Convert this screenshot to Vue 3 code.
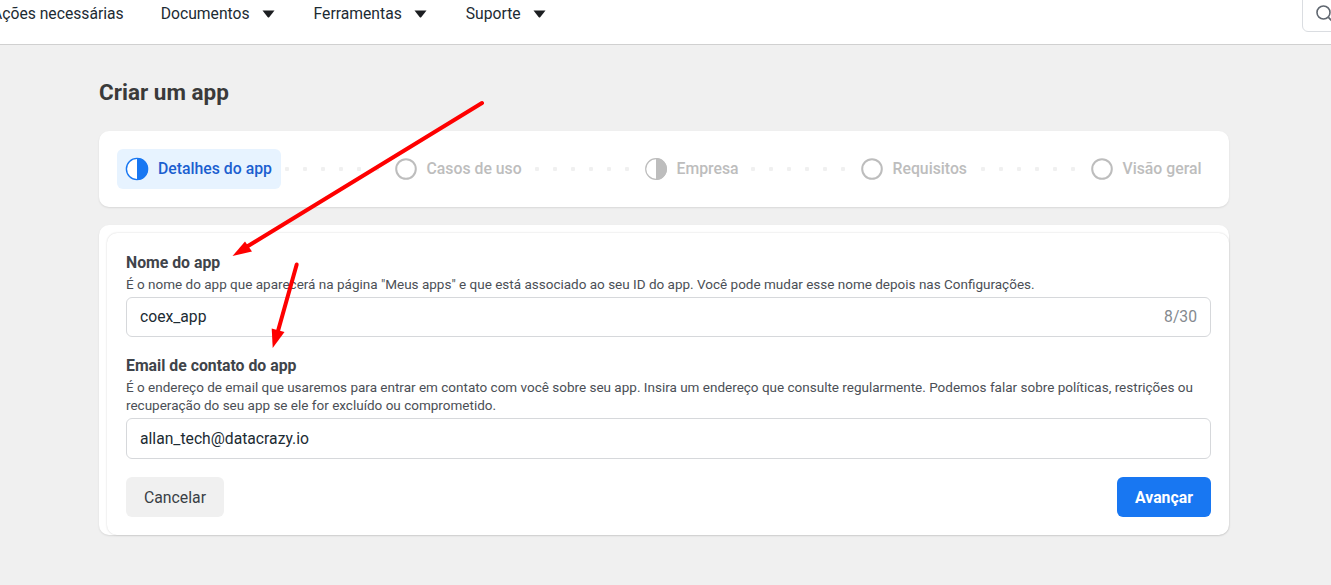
<script setup>
const navItems = [
  { label: 'Ações necessárias', caret: false },
  { label: 'Documentos', caret: true },
  { label: 'Ferramentas', caret: true },
  { label: 'Suporte', caret: true },
]
const steps = [
  { label: 'Casos de uso', icon: 'ring', width: 140 },
  { label: 'Empresa', icon: 'half', width: 106 },
  { label: 'Requisitos', icon: 'ring', width: 120 },
  { label: 'Visão geral', icon: 'ring', width: 112 },
]
</script>

<template>
  <div class="page">
    <header class="topbar">
      <nav class="nav">
        <a v-for="item in navItems" :key="item.label" class="nav-item">
          <span>{{ item.label }}</span>
          <svg v-if="item.caret" class="caret" width="13" height="8" viewBox="0 0 13 8"><path d="M0.5 0.5h12L7.4 7a1.2 1.2 0 0 1-1.8 0z" fill="#1c1e21" /></svg>
        </a>
      </nav>
      <div class="search">
        <svg width="20" height="20" viewBox="0 0 20 20" fill="none" stroke="#606770" stroke-width="1.6"><circle cx="8.5" cy="8.5" r="6.5" /><path d="M13.4 13.4 18 18" /></svg>
      </div>
    </header>

    <main class="content">
      <h1 class="title">Criar um app</h1>

      <section class="card stepper">
        <div class="step active">
          <svg width="24" height="24" viewBox="0 0 24 24"><circle cx="12" cy="12" r="10.6" fill="#fff" stroke="#1877f2" stroke-width="1.4" /><path d="M12 1a11 11 0 0 1 0 22z" fill="#1877f2" /></svg>
          <span class="step-label">Detalhes do app</span>
        </div>
        <template v-for="step in steps" :key="step.label">
          <div class="dots"><i v-for="n in 6" :key="n"></i></div>
          <div class="step" :style="{ width: step.width + 'px' }">
            <svg v-if="step.icon === 'ring'" width="22" height="22" viewBox="0 0 22 22"><circle cx="11" cy="11" r="9.8" fill="none" stroke="#bdbdbd" stroke-width="2" /></svg>
            <svg v-else width="22" height="22" viewBox="0 0 22 22"><circle cx="11" cy="11" r="10.3" fill="#fff" stroke="#bdbdbd" stroke-width="1.2" /><path d="M11 0a11 11 0 0 1 0 22z" fill="#bdbdbd" /></svg>
            <span class="step-label">{{ step.label }}</span>
          </div>
        </template>
      </section>

      <section class="card outer">
        <form class="inner" @submit.prevent>
          <div class="field first">
            <label>Nome do app</label>
            <p>É o nome do app que aparecerá na página "Meus apps" e que está associado ao seu ID do app. Você pode mudar esse nome depois nas Configurações.</p>
            <div class="input"><span>coex_app</span><span class="count">8/30</span></div>
          </div>
          <div class="field second">
            <label>Email de contato do app</label>
            <p>É o endereço de email que usaremos para entrar em contato com você sobre seu app. Insira um endereço que consulte regularmente. Podemos falar sobre políticas, restrições ou recuperação do seu app se ele for excluído ou comprometido.</p>
            <div class="input tall"><span>allan_tech@datacrazy.io</span></div>
          </div>
          <div class="actions">
            <button type="button" class="btn cancel">Cancelar</button>
            <button type="button" class="btn next">Avançar</button>
          </div>
        </form>
      </section>
    </main>

    <svg class="arrows" width="1331" height="585" viewBox="0 0 1331 585">
      <path d="M482 103 248 246" stroke="#fe0000" stroke-width="4" stroke-linecap="round" fill="none" />
      <path d="M232.5 256 245 241.5 252 251.5z" fill="#fe0000" />
      <path d="M296.7 264.5 278 331" stroke="#fe0000" stroke-width="4" stroke-linecap="round" fill="none" />
      <path d="M272.7 348 271.7 328.5 284.5 332z" fill="#fe0000" />
    </svg>
  </div>
</template>

<style>
html, body { margin: 0; background: #f0f0f0; }
</style>

<style scoped>
.page {
  position: relative;
  width: 1331px;
  height: 585px;
  overflow: hidden;
  background: #f0f0f0;
  font-family: Roboto, "Liberation Sans", sans-serif;
  color: #1c1e21;
}
.topbar {
  display: flex;
  justify-content: space-between;
  height: 44px;
  background: #fff;
  border-bottom: 1px solid #d0d0d0;
}
.nav {
  display: flex;
  gap: 40px;
  margin-left: -8px;
  height: 26px;
  align-items: center;
}
.nav-item {
  display: flex;
  align-items: center;
  gap: 12px;
  font-size: 15.7px;
  color: #1c2b33;
  white-space: nowrap;
}
.nav-item:first-child { margin-right: -3px; }
.caret { flex: none; margin-top: 1px; margin-right: -1px; }
.search {
  box-sizing: border-box;
  width: 40px;
  height: 33px;
  margin-top: -1px;
  margin-right: -11px;
  padding: 4px 0 0 12px;
  border: 1px solid #dadde1;
  border-radius: 0 0 0 6px;
}
.content {
  display: flex;
  flex-direction: column;
  width: 1130px;
  margin-left: 99px;
}
.title {
  margin: 33px 0 0;
  height: 53px;
  font-size: 22.5px;
  line-height: 28px;
  font-weight: 700;
  color: #3a3a3a;
}
.card {
  background: #fff;
  border-radius: 10px;
  box-shadow: 0 1px 2px rgba(0, 0, 0, 0.1);
}
.stepper {
  box-sizing: border-box;
  display: flex;
  align-items: center;
  height: 76px;
  padding-left: 18px;
}
.step {
  box-sizing: border-box;
  display: flex;
  align-items: center;
  gap: 9.5px;
  flex: none;
  font-size: 15.8px;
  font-weight: 500;
  color: #bdbdbd;
  white-space: nowrap;
}
.step-label { margin-bottom: 2px; }
.step.active {
  height: 40px;
  width: 164px;
  margin-right: 4px;
  padding-left: 8px;
  gap: 9px;
  background: #e7f3ff;
  border-radius: 6px;
  color: #1b5fd0;
}
.dots {
  flex: none;
  display: flex;
  gap: 14px;
  margin-right: 16px;
}
.dots i {
  width: 4px;
  height: 4px;
  background: #f0f0f0;
  border-radius: 1px;
}
.outer {
  margin-top: 18px;
  height: 310px;
  padding: 8px 0 0 8px;
  box-sizing: border-box;
}
.inner {
  box-sizing: border-box;
  height: 302px;
  padding: 20px 18px 0 19px;
  border-radius: 10px;
  box-shadow: 0 0 2px rgba(0, 0, 0, 0.18);
}
.field label {
  display: block;
  font-size: 15.8px;
  line-height: 20px;
  font-weight: 700;
  color: #3f444a;
}
.field p {
  margin: 2px 0 0;
  font-size: 13.5px;
  line-height: 18px;
  color: #4b4f56;
}
.field.second { margin-top: 19px; }
.input {
  box-sizing: border-box;
  display: flex;
  justify-content: space-between;
  align-items: center;
  height: 40px;
  margin-top: 4px;
  padding: 0 13px 1px;
  border: 1px solid #d6d8db;
  border-radius: 6px;
  font-size: 15.7px;
  color: #1c2b33;
}
.input.tall { height: 41px; }
.count { color: #858a8f; }
.actions {
  display: flex;
  justify-content: space-between;
  margin-top: 18px;
}
.btn {
  height: 40px;
  border: 0;
  border-radius: 6px;
  font-family: inherit;
  font-size: 15.8px;
}
.cancel {
  width: 98px;
  background: #f0f0f0;
  color: #3a3f45;
}
.next {
  width: 94px;
  background: #1877f2;
  color: #fff;
  font-weight: 700;
}
.arrows {
  position: absolute;
  inset: 0;
  pointer-events: none;
}
</style>
